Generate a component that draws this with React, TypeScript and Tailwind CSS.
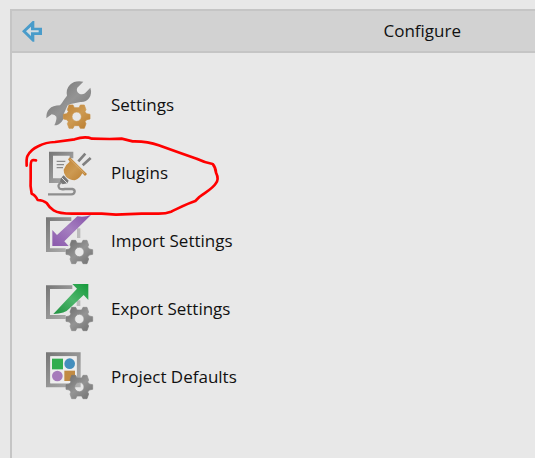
import type { ReactNode } from "react";

function Gradients() {
  return (
    <svg className="absolute h-0 w-0" aria-hidden="true">
      <defs>
        <linearGradient id="gray" x1="0" y1="0" x2="1" y2="1">
          <stop offset="0" stopColor="#6c6c6c" />
          <stop offset="0.5" stopColor="#949494" />
          <stop offset="1" stopColor="#6f6f6f" />
        </linearGradient>
        <linearGradient id="frame" x1="0" y1="0" x2="1" y2="1">
          <stop offset="0" stopColor="#757575" />
          <stop offset="0.5" stopColor="#959595" />
          <stop offset="1" stopColor="#b2b2b2" />
        </linearGradient>
        <linearGradient id="orange" x1="0" y1="0" x2="1" y2="1">
          <stop offset="0" stopColor="#c08234" />
          <stop offset="0.5" stopColor="#cd9a52" />
          <stop offset="1" stopColor="#b97b2c" />
        </linearGradient>
        <linearGradient id="purple" x1="0" y1="1" x2="1" y2="0">
          <stop offset="0" stopColor="#8a58ac" />
          <stop offset="0.5" stopColor="#a57fc0" />
          <stop offset="1" stopColor="#8450a8" />
        </linearGradient>
        <linearGradient id="green" x1="0" y1="1" x2="1" y2="0">
          <stop offset="0" stopColor="#1f9140" />
          <stop offset="0.5" stopColor="#4db56b" />
          <stop offset="1" stopColor="#159a3b" />
        </linearGradient>
      </defs>
    </svg>
  );
}

function IconFrame({ viewBox, children }: { viewBox: string; children: ReactNode }) {
  return (
    <svg viewBox={viewBox} className="size-13 shrink-0" aria-hidden="true">
      {children}
    </svg>
  );
}

const gearPath =
  "M-23-35H-11L-7-27H7L11-35H23L28-21L25-15L30-9L40-7V7L30 9L25 15L28 21L23 35H11L7 27H-7L-11 35H-23L-28 21L-25 15L-30 9L-40 7V-7L-30-9L-25-15L-28-21ZM0-14A14 14 0 1 0 0 14A14 14 0 1 0 0-14Z";

function Gear({ x, y, fill }: { x: number; y: number; fill: string }) {
  return (
    <path transform={`translate(${x} ${y})`} d={gearPath} fill={fill} stroke={fill} strokeWidth="2" strokeLinejoin="round" fillRule="evenodd" />
  );
}

function SettingsIcon() {
  return (
    <IconFrame viewBox="15 12 156 156">
      <path
        d="M130 20Q105 15 90 29Q77 42 81 62L72 74Q66 84 60 91Q38 91 28 102Q18 112 19 130L35 118Q45 119 49 125Q51 134 43 151Q56 151 65 140Q73 130 71 117L83 91Q90 86 103 85L121 81Q139 82 147 70Q157 56 151 38L135 55Q127 60 118 56Q107 48 112 38Z"
        fill="url(#gray)"
      />
      <Gear x={110} y={125} fill="url(#orange)" />
    </IconFrame>
  );
}

function PluginsIcon() {
  return (
    <IconFrame viewBox="15 21 156 156">
      <path d="M27 35H100V55H89V47H39V115H64V129H27Z" fill="url(#frame)" />
      <path d="M50 64H76M50 74H72M50 83H69" stroke="#8a8a8a" strokeWidth="4" />
      <path d="M115 64L136 41M128 76L152 54" stroke="#808080" strokeWidth="8" />
      <path d="M90 52L141 102L135 108L127 100Q119 116 104 121Q88 120 78 110Q70 100 71 89Q77 73 89 65L84 58Z" fill="url(#orange)" />
      <path d="M90 58L135 102" stroke="#dcb580" strokeWidth="2" />
      <path d="M71 106L86 122L82 130L68 133L60 125L63 114Z" fill="#777" />
      <path d="M64 112L81 129" stroke="#ddd" strokeWidth="3" />
      <path d="M63 127Q50 137 59 146Q63 149 75 147H97Q104 148 104 155Q103 163 94 163H24" fill="none" stroke="#8e8e8e" strokeWidth="7" />
    </IconFrame>
  );
}

function ImportIcon() {
  return (
    <IconFrame viewBox="15 15 156 156">
      <path d="M18 22H94V33H30V115H77V126H18Z" fill="url(#frame)" />
      <path d="M111 55H121V84H111Z" fill="#bbb" />
      <path d="M112 19Q133 23 153 15L73 94L86 108H37V60L51 75Z" fill="url(#purple)" />
      <Gear x={118} y={126} fill="url(#gray)" />
    </IconFrame>
  );
}

function ExportIcon() {
  return (
    <IconFrame viewBox="15 15 156 156">
      <path d="M18 22H97V33H30V111H77V123H18Z" fill="url(#frame)" />
      <path d="M110 67H121V84H110Z" fill="#bbb" />
      <path d="M97 18H145V66L131 51L89 91Q75 108 40 108L111 32Z" fill="url(#green)" />
      <Gear x={118} y={123} fill="url(#gray)" />
    </IconFrame>
  );
}

function DefaultsIcon() {
  return (
    <IconFrame viewBox="15 18 156 156">
      <path d="M18 22H122V127H18ZM31 34V115H110V34Z" fill="url(#frame)" fillRule="evenodd" />
      <path d="M31 34H110V115H31Z" fill="#eee" />
      <path d="M36 41H69V73H36Z" fill="#32ad50" />
      <circle cx="89" cy="56" r="16" fill="#448ebd" />
      <circle cx="52" cy="93" r="16" fill="#a67bbb" />
      <path d="M73 77H105V108H73Z" fill="#c18b43" />
      <Gear x={118} y={126} fill="url(#gray)" />
    </IconFrame>
  );
}

function HandDrawnCircle() {
  return (
    <svg
      viewBox="0 0 660 300"
      className="pointer-events-none absolute -top-3.5 -left-7.5 z-10 h-25 w-55"
      fill="none"
      stroke="#ff0000"
      strokeWidth="8"
      strokeLinecap="round"
      strokeLinejoin="round"
      aria-hidden="true"
    >
      <path d="M35 122Q34 101 37 94Q46 74 71 63Q92 52 120 51L179 43Q210 32 231 41L284 42L320 41L353 49Q397 48 431 61L498 85L545 101Q571 113 593 117Q602 127 603 143Q613 163 602 176C592 192 572 201 553 216L541 228C516 236 492 249 468 260Q453 266 431 266H380L303 269L260 266H179Q134 267 116 256Q103 248 95 234Q85 226 68 225Q61 210 50 206Q45 181 47 160V120Q48 105 54 105L63 106" />
    </svg>
  );
}

const items = [
  { label: "Settings", icon: <SettingsIcon /> },
  { label: "Plugins", icon: <PluginsIcon />, marked: true },
  { label: "Import Settings", icon: <ImportIcon /> },
  { label: "Export Settings", icon: <ExportIcon /> },
  { label: "Project Defaults", icon: <DefaultsIcon /> },
];

export default function App() {
  return (
    <div className="min-h-screen overflow-hidden bg-[#e8e8e8] pt-[9px] pl-2.5 font-['Open_Sans','Noto_Sans',sans-serif] text-[17px] leading-6 text-[#111]">
      <Gradients />
      <main className="min-h-[449px] border-t-2 border-l-2 border-[#c5c5c5]">
        <header className="flex h-[42px] items-center border-b-2 border-[#c5c5c5] bg-[#d2d2d2] pr-[74px] pl-2.5">
          <button type="button" aria-label="Back">
            <svg viewBox="66 66 60 63" className="h-[21px] w-5" aria-hidden="true">
              <path d="M66 97L98 66H103V86H126V108H103V128H98Z" fill="#4a9cca" />
              <path d="M78 97L93 83V94H116V100H93V111Z" fill="#d3dce1" />
            </svg>
          </button>
          <h1 className="ml-auto">Configure</h1>
        </header>
        <nav className="pt-[18px] pl-[33px]">
          <ul>
            {items.map((item) => (
              <li key={item.label} className="relative">
                <button type="button" className="flex h-17 items-center gap-3.5 text-left">
                  {item.icon}
                  <span>{item.label}</span>
                </button>
                {item.marked && <HandDrawnCircle />}
              </li>
            ))}
          </ul>
        </nav>
      </main>
    </div>
  );
}
